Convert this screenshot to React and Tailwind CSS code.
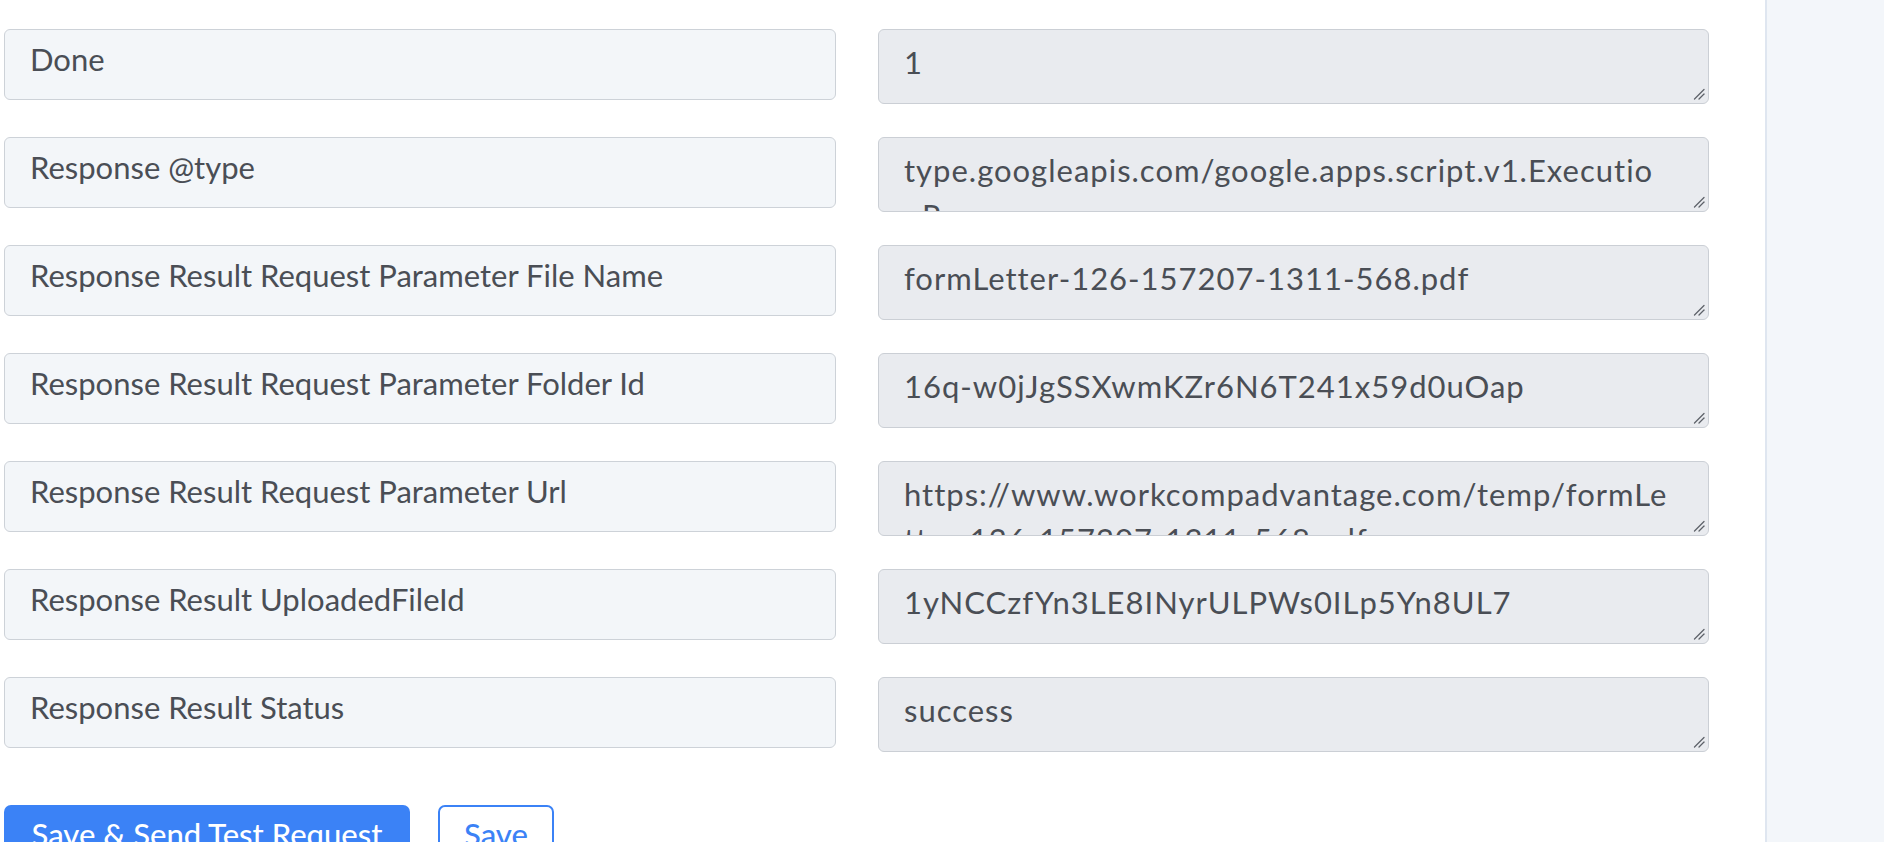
import React from "react";

const rows = [
  ["Done", "1"],
  ["Response @type", "type.googleapis.com/google.apps.script.v1.Executio\nnResponse"],
  ["Response Result Request Parameter File Name", "formLetter-126-157207-1311-568.pdf"],
  ["Response Result Request Parameter Folder Id", "16q-w0jJgSSXwmKZr6N6T241x59d0uOap"],
  ["Response Result Request Parameter Url", "https://www.workcompadvantage.com/temp/formLe\ntter-126-157207-1311-568.pdf"],
  ["Response Result UploadedFileId", "1yNCCzfYn3LE8INyrULPWs0ILp5Yn8UL7"],
  ["Response Result Status", "success"],
];

const font = { fontFamily: "Lato, 'Open Sans', sans-serif" };

// Diagonal grip drawn in the textarea's bottom-right corner
function Grip() {
  return (
    <svg
      className="pointer-events-none absolute bottom-[4px] right-[4px]"
      width="12"
      height="12"
      viewBox="0 0 12 12"
    >
      <path d="M1.5 11 L11 1.5" stroke="#5d6168" strokeWidth="1.3" strokeLinecap="round" />
      <path d="M6 11 L11 6" stroke="#5d6168" strokeWidth="1.3" strokeLinecap="round" />
    </svg>
  );
}

export default function App() {
  return (
    <div
      className="flex h-[842px] w-[1884px] overflow-hidden bg-white text-[#4a4e55]"
      style={font}
    >
      <main className="flex w-[1765px] flex-col pl-[4px] pt-[29px]">
        <div className="flex flex-col gap-[33px]">
          {rows.map(([label, value]) => (
            <div key={label} className="flex items-start gap-[42px]">
              <div className="h-[71px] w-[832px] rounded-[6px] border border-[#cdd2d8] bg-[#f3f6f9] px-[25px] pt-[11px] text-[31px] leading-[36px]">
                {label}
              </div>
              <div className="relative h-[75px] w-[831px]">
                <textarea
                  readOnly
                  value={value}
                  className="block h-full w-full resize-none overflow-hidden whitespace-pre rounded-[6px] border border-[#cbcfd5] bg-[#e9ebef] pl-[25px] pr-[10px] pt-[10px] text-[31px] leading-[45px] tracking-[1px] text-[#4a4e55] outline-none"
                  style={font}
                />
                <Grip />
              </div>
            </div>
          ))}
        </div>
        <div className="mt-[53px] flex items-start gap-[28px]">
          <button className="w-[406px] rounded-[7px] bg-[#3b82f6] pb-[12px] pt-[11px] text-center text-[31px] font-medium leading-[36px] text-white">
            Save &amp; Send Test Request
          </button>
          <button className="w-[116px] rounded-[7px] border-2 border-[#3b82f6] bg-white pb-[10px] pt-[9px] text-center text-[31px] font-medium leading-[36px] text-[#3b82f6]">
            Save
          </button>
        </div>
      </main>
      <aside className="w-[119px] border-l-2 border-[#dfe6f0] bg-[#f3f6fa]" />
    </div>
  );
}
